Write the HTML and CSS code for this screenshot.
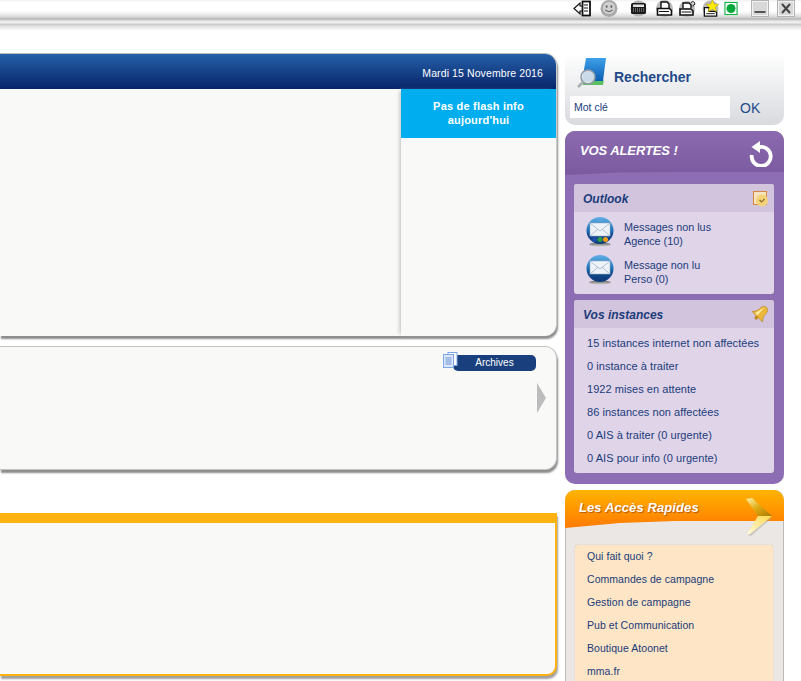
FILE: index.html
```html
<!DOCTYPE html>
<html lang="fr">
<head>
    <meta charset="UTF-8">
    <title>Accueil</title>
    <link rel="stylesheet" href="styles.css">
</head>
<body>
    <div class="toolbar">
        <svg class="tool w18" viewBox="0 0 18 17"><path d="M1 8.500l6-5.500v3h3v5H7v3z" fill="#fff" stroke="#111" stroke-width="1.200"/><rect x="9.500" y="1.500" width="7.500" height="14" fill="#fff" stroke="#111" stroke-width="1.800"/><path d="M11 5h4M11 8h4M11 11h4" stroke="#111" stroke-width="1.200"/></svg>
        <svg class="tool w18 gap9" viewBox="0 0 18 18"><circle cx="9" cy="9" r="9" fill="#aaa"/><circle cx="9" cy="8.500" r="7" fill="#d0d0d0" stroke="#a4a4a4"/><ellipse cx="6.500" cy="7" rx="1" ry="1.500" fill="#666"/><ellipse cx="11.500" cy="7" rx="1" ry="1.500" fill="#666"/><path d="M5 10.500q4 3.500 8 0" fill="none" stroke="#666" stroke-width="1.200"/></svg>
        <svg class="tool w17 gap12" viewBox="0 0 17 16"><circle cx="8.500" cy="8" r="8" fill="#b4b4b4"/><rect x="1" y="2.500" width="15" height="11" rx="1.500" fill="#1c1c1c"/><rect x="3" y="4" width="11" height="2.500" fill="#e4e4e4"/><path d="M3 8.500h11M3 10.500h11" stroke="#aaa" stroke-dasharray="1 1"/></svg>
        <svg class="tool w17 gap9" viewBox="0 0 17 17"><circle cx="8.500" cy="8.500" r="8.500" fill="#bcbcbc"/><path d="M5 8V2h6l2 2v4" fill="#fff" stroke="#111" stroke-width="1.400"/><path d="M1.500 8.500h12l2 2v4.500h-14z" fill="#fff" stroke="#111" stroke-width="1.600"/><path d="M3 11.500h10" stroke="#111"/></svg>
        <svg class="tool w17 gap6" viewBox="0 0 17 17"><circle cx="8" cy="9" r="8" fill="#bcbcbc"/><path d="M4 8V3h6l2 2v3" fill="#fff" stroke="#111" stroke-width="1.400"/><path d="M1 9h11l2 2v4H1z" fill="#fff" stroke="#111" stroke-width="1.600"/><path d="M2.500 12h10" stroke="#111"/><path d="M12 2.500q2-2 3.500 0t-1.500 3v1" fill="none" stroke="#111"/></svg>
        <svg class="tool w17 gap6" viewBox="0 0 17 18"><circle cx="8.500" cy="9" r="8.500" fill="#bcbcbc"/><path d="M2 8h5v4h6l2 1v4H2z" fill="#fff" stroke="#111" stroke-width="1.400"/><path d="M4 14.500h9" stroke="#111"/><path d="M10.500-.5l2 4.800 5 .2-3.800 3.200 1.300 4.800-4.500-2.700-4.500 2.700 1.300-4.800L3.500 4.500l5-.2z" fill="#ffec00" stroke="#8a7a00" stroke-width=".4"/></svg>
        <svg class="tool w14 gap5" viewBox="0 0 14 16"><rect x="0" y="1" width="14" height="14" fill="#bfe8c9"/><rect x="1" y="2" width="12" height="12" fill="#fff" stroke="#17b34a"/><circle cx="7" cy="8" r="4.500" fill="#07a83b"/></svg>
        <svg class="tool w18 gap13" viewBox="0 0 18 17"><rect x=".5" y=".5" width="17" height="16" fill="#f2f2f2" stroke="#b4b4b4"/><rect x="2" y="2" width="14" height="13" fill="#d8d8d8"/><rect x="3.500" y="11" width="11" height="2" fill="#555"/></svg>
        <svg class="tool w18 gap8" viewBox="0 0 18 17"><rect x=".5" y=".5" width="17" height="16" fill="#f2f2f2" stroke="#b4b4b4"/><rect x="2" y="2" width="14" height="13" fill="#d8d8d8"/><path d="M5 4l8 9M13 4l-8 9" stroke="#444" stroke-width="2"/></svg>
    </div>

    <div class="page">
        <main class="main">
            <section class="panel panel-news">
                <div class="news-head">Mardi 15 Novembre 2016</div>
                <div class="news-body">
                    <div class="news-left"></div>
                    <div class="flash">
                        <div class="flash-title">Pas de flash info<br>aujourd'hui</div>
                    </div>
                </div>
            </section>

            <section class="panel panel-archives">
                <div class="archives-line">
                    <svg class="archives-icon" viewBox="0 0 15 16"><rect x="5" y=".5" width="9" height="13" fill="#fff" stroke="#7fa6e6"/><rect x=".5" y="2.500" width="10" height="13" fill="#dbe6fa" stroke="#7fa6e6"/><path d="M2.500 6h6M2.500 8h6M2.500 10h6M2.500 12h6" stroke="#6f96d8"/></svg>
                    <div class="archives-btn">Archives</div>
                </div>
                <div class="arrow-next"></div>
            </section>

            <section class="panel panel-orange"></section>
        </main>

        <aside class="side">
            <div class="search">
                <div class="search-title">
                    <svg class="search-icon" viewBox="0 0 30 30">
                        <defs>
                            <linearGradient id="bookBlue" x1="0" y1="0" x2="0" y2="1"><stop offset="0" stop-color="#3fa0ea"/><stop offset="1" stop-color="#0a5fb4"/></linearGradient>
                        </defs>
                        <path d="M9 0h20l-3 23H5z" fill="url(#bookBlue)"/>
                        <path d="M5 23h21l1-2-1 6H6z" fill="#5cc060"/>
                        <circle cx="11" cy="19" r="7" fill="#dfe7ee" fill-opacity=".9" stroke="#8d9aa5" stroke-width="1.500"/>
                        <path d="M6 24l-5 5" stroke="#a8b0b4" stroke-width="2.500"/>
                    </svg>
                    <span>Rechercher</span>
                </div>
                <div class="search-form">
                    <div class="search-input">Mot clé</div>
                    <div class="search-ok">OK</div>
                </div>
            </div>

            <div class="alerts">
                <div class="alerts-head">
                    <span class="alerts-title">VOS ALERTES !</span>
                    <svg class="refresh" viewBox="0 0 24 26"><path d="M9 6.500A9.500 9.500 0 1 1 2.800 14" fill="none" stroke="#fff" stroke-width="3.800"/><path d="M11 0v12L2.500 6z" fill="#fff"/></svg>
                </div>

                <div class="box box-outlook">
                    <div class="box-head">
                        <span>Outlook</span>
                        <svg class="box-icon" viewBox="0 0 16 16"><rect x=".5" y=".5" width="13" height="13" fill="#f6e4c0" stroke="#d8873a"/><circle cx="9" cy="9.500" r="6" fill="#f3d27a"/><path d="M6.500 9l2 2 3-3" fill="none" stroke="#8a6a20" stroke-width="1.200"/></svg>
                    </div>
                    <div class="mail-row">
                        <svg class="mail-icon" viewBox="0 0 28 30">
                            <defs>
                                <linearGradient id="sphere" x1="0" y1="0" x2="0" y2="1"><stop offset="0" stop-color="#62b0e6"/><stop offset=".5" stop-color="#1b70b8"/><stop offset=".65" stop-color="#114a90"/><stop offset="1" stop-color="#0d3a78"/></linearGradient>
                                <linearGradient id="sphereShadow" x1="0" y1="0" x2="0" y2="1"><stop offset="0" stop-color="#666"/><stop offset="1" stop-color="#ccc"/></linearGradient>
                            </defs>
                            <ellipse cx="14" cy="27.500" rx="11" ry="2" fill="url(#sphereShadow)"/>
                            <circle cx="14" cy="13.500" r="13.500" fill="url(#sphere)"/>
                            <rect x="4" y="6" width="20" height="13" fill="#eef3f8" stroke="#9fb4c8" stroke-width=".6"/>
                            <path d="M4 6l10 8 10-8M4 19l8-7M24 19l-8-7" fill="none" stroke="#9fb4c8" stroke-width=".8"/>
                            <circle cx="8.500" cy="22.500" r="2.500" fill="#1f4fa8"/>
                            <circle cx="14" cy="22.500" r="2.500" fill="#2e9e46"/>
                            <circle cx="19.500" cy="22.500" r="2.500" fill="#f39a12"/>
                        </svg>
                        <div class="mail-text">Messages non lus<br>Agence (10)</div>
                    </div>
                    <div class="mail-row">
                        <svg class="mail-icon" viewBox="0 0 28 30">
                            <ellipse cx="14" cy="27.500" rx="11" ry="2" fill="url(#sphereShadow)"/>
                            <circle cx="14" cy="13.500" r="13.500" fill="url(#sphere)"/>
                            <rect x="4" y="6" width="20" height="13" fill="#eef3f8" stroke="#9fb4c8" stroke-width=".6"/>
                            <path d="M4 6l10 8 10-8M4 19l8-7M24 19l-8-7" fill="none" stroke="#9fb4c8" stroke-width=".8"/>
                        </svg>
                        <div class="mail-text">Message non lu<br>Perso (0)</div>
                    </div>
                </div>

                <div class="box box-instances">
                    <div class="box-head">
                        <span>Vos instances</span>
                        <svg class="bell" viewBox="0 0 17 17">
                            <g transform="rotate(45 8.500 8.500)">
                                <path d="M8.500 0C6 0 4.500 2 4.500 5.500 4.500 9 3 11 1 13h15c-2-2-3.500-4-3.500-7.500C12.500 2 11 0 8.500 0z" fill="#ecb83c" stroke="#b08016" stroke-width=".6"/>
                                <path d="M7 2C6 4 6 8 4.500 12h3z" fill="#ffeeb0"/>
                                <circle cx="8.500" cy="14.500" r="1.800" fill="#c08a1c"/>
                            </g>
                        </svg>
                    </div>
                    <ul class="link-list">
                        <li>15 instances internet non affectées</li>
                        <li>0 instance à traiter</li>
                        <li>1922 mises en attente</li>
                        <li>86 instances non affectées</li>
                        <li>0 AIS à traiter (0 urgente)</li>
                        <li>0 AIS pour info (0 urgente)</li>
                    </ul>
                </div>
            </div>

            <div class="quick">
                <div class="quick-head">
                    <span class="quick-title">Les Accès Rapides</span>
                    <svg class="chevron" viewBox="0 0 28 38">
                        <defs>
                            <linearGradient id="armTop" x1="0" y1="0" x2="1" y2="1"><stop offset="0" stop-color="#fff6b0"/><stop offset=".5" stop-color="#e0a810"/><stop offset="1" stop-color="#a87a08"/></linearGradient>
                            <linearGradient id="armLow" x1="1" y1="0" x2="0" y2="1"><stop offset="0" stop-color="#ffd84a"/><stop offset="1" stop-color="#fffbe0"/></linearGradient>
                        </defs>
                        <path d="M3 37l12-17h12L6 38z" fill="#b0a8a0" fill-opacity=".5"/>
                        <path d="M1 1l6-1 20 18H13z" fill="url(#armTop)"/>
                        <path d="M13 18h14L5 36H2z" fill="url(#armLow)"/>
                    </svg>
                </div>
                <ul class="link-list quick-list">
                    <li>Qui fait quoi ?</li>
                    <li>Commandes de campagne</li>
                    <li>Gestion de campagne</li>
                    <li>Pub et Communication</li>
                    <li>Boutique Atoonet</li>
                    <li>mma.fr</li>
                </ul>
            </div>
        </aside>
    </div>
</body>
</html>
```

FILE: styles.css
```css
html, body {
    height: 681px;
    overflow: hidden;
}
body {
    margin: 0;
    background-color: #fff;
    font-family: "Liberation Sans", Arial, sans-serif;
    font-size: 11px;
    color: #1a3c7a;
}
ul {
    list-style: none;
    margin: 0;
    padding: 0;
}
svg {
    display: block;
}

/* barre du haut */
.toolbar {
    height: 30px;
    box-sizing: border-box;
    display: flex;
    align-items: flex-start;
    justify-content: flex-end;
    padding: 0 6px 0 0;
    background: linear-gradient(to bottom, #f0f0f0 0, #fff 2px, #fff 11px, #eee 14px, #d8d8d8 17px, #b4b4b4 19px, #e8e8e8 21px, #f2f2f2 23px, #c8c8c8 24px, #e8e8e8 27px, #fff 31px);
}
.tool {
    height: 17px;
    flex: none;
}
.w18 { width: 18px; }
.w17 { width: 17px; }
.w14 { width: 14px; }
.gap5 { margin-left: 5px; }
.gap6 { margin-left: 6px; }
.gap8 { margin-left: 8px; }
.gap9 { margin-left: 9px; }
.gap12 { margin-left: 12px; }
.gap13 { margin-left: 13px; }

.page {
    width: 784px;
    margin-top: 23px;
    display: flex;
    gap: 8px;
    align-items: flex-start;
}

/* colonne principale */
.main {
    width: 557px;
    flex: none;
}
.panel {
    background-color: #f9f9f7;
    border-radius: 0 12px 12px 0;
    box-sizing: border-box;
}
.panel-news {
    height: 283px;
    border-top: 1px solid #bcbcbc;
    border-right: 1px solid #ccc;
    box-shadow: 1px 3px 2px #8c8c8c;
}
.news-head {
    height: 35px;
    box-sizing: border-box;
    padding: 13px 13px 0 0;
    text-align: right;
    color: #fff;
    font-size: 10.5px;
    letter-spacing: .1px;
    background: linear-gradient(to bottom, #2560a8, #08246a);
    border-radius: 0 11px 0 0;
}
.news-body {
    display: flex;
    height: 247px;
}
.news-left {
    flex: 1;
}
.flash {
    width: 155px;
    box-sizing: border-box;
    box-shadow: -3px 0 4px -2px #bbb;
}
.flash-title {
    height: 49px;
    box-sizing: border-box;
    padding-top: 10px;
    background-color: #00aeef;
    color: #fff;
    font-weight: bold;
    font-size: 11px;
    letter-spacing: .2px;
    line-height: 14px;
    text-align: center;
}
.panel-archives {
    position: relative;
    height: 124px;
    margin-top: 10px;
    border: 1px solid #c4c4c4;
    border-left: none;
    box-shadow: 1px 3px 2px #8c8c8c;
}
.archives-line {
    display: flex;
    justify-content: flex-end;
    align-items: flex-start;
    padding: 5px 20px 0 0;
}
.archives-icon {
    width: 15px;
    height: 16px;
    margin-right: -5px;
    position: relative;
    z-index: 1;
}
.archives-btn {
    width: 83px;
    height: 16px;
    margin-top: 3px;
    background-color: #1a3f7d;
    border-radius: 5px;
    color: #fff;
    font-size: 10px;
    line-height: 16px;
    text-align: center;
}
.arrow-next {
    position: absolute;
    right: 10px;
    top: 36px;
    border-left: 9px solid #bcbcbc;
    border-top: 15px solid transparent;
    border-bottom: 15px solid transparent;
}
.panel-orange {
    height: 163px;
    margin-top: 43px;
    border-top: 10px solid #ffb311;
    border-right: 2px solid #ffb311;
    border-bottom: 2px solid #ffb311;
    border-radius: 0 0 10px 0;
    box-shadow: 1px 3px 2px #a0a0a0;
}

/* colonne droite */
.side {
    width: 219px;
    flex: none;
}
.search {
    height: 72px;
    box-sizing: border-box;
    padding: 4px 0 0 5px;
    background: linear-gradient(to bottom, #fff, #d8dade);
    border-radius: 0 0 10px 10px;
}
.search-title {
    display: flex;
    align-items: flex-end;
    height: 31px;
    padding-left: 7px;
    font-size: 14px;
    font-weight: bold;
    color: #1f4a8a;
}
.search-title span {
    margin-left: 7px;
    margin-bottom: 3px;
}
.search-icon {
    width: 30px;
    height: 30px;
}
.search-form {
    display: flex;
    margin-top: 8px;
}
.search-input {
    width: 156px;
    height: 22px;
    padding-left: 4px;
    background-color: #fff;
    font-size: 10.5px;
    line-height: 22px;
}
.search-ok {
    margin-left: 10px;
    font-size: 14px;
    line-height: 24px;
    color: #1f4a8a;
}
.alerts {
    position: relative;
    height: 353px;
    margin-top: 6px;
    box-sizing: border-box;
    padding: 53px 10px 0 9px;
    background-color: #8d6db3;
    border-radius: 10px;
    box-shadow: inset 0 1px 0 #aaa;
}
.alerts-head {
    position: absolute;
    left: 0;
    right: 0;
    top: 0;
    height: 44px;
    display: flex;
    justify-content: space-between;
    align-items: flex-start;
    padding: 12px 11px 0 15px;
    box-sizing: border-box;
}
.alerts-head::before {
    content: "";
    position: absolute;
    left: 0;
    right: 0;
    top: 0;
    bottom: 0;
    border-radius: 10px 10px 0 0;
    background: linear-gradient(to bottom, #8c6ab0, #7c5aa0);
    clip-path: polygon(0 0, 100% 0, 100% 41px, 50% 41px, 25% 41.500px, 0 44px);
}
.alerts-title {
    position: relative;
    color: #fff;
    font-size: 13px;
    font-weight: bold;
    font-style: italic;
    letter-spacing: -.1px;
}
.refresh {
    position: relative;
    width: 24px;
    height: 26px;
    margin: -2px 0 0 0;
}
.box {
    width: 200px;
    background-color: #e0d4e9;
    border-radius: 3px;
    box-shadow: 0 0 1px #888;
}
.box-outlook {
    height: 110px;
}
.box-instances {
    height: 173px;
    margin-top: 6px;
}
.box-head {
    height: 28px;
    box-sizing: border-box;
    padding: 2px 4px 0 9px;
    display: flex;
    align-items: center;
    justify-content: space-between;
    background-color: #d3c4de;
    border-radius: 3px 3px 0 0;
    font-size: 12px;
    font-weight: bold;
    font-style: italic;
    color: #1a3c7a;
}
.box-icon {
    width: 16px;
    height: 16px;
    margin-right: 1px;
}
.bell {
    width: 17px;
    height: 17px;
    margin: -4px 1px 0 0;
}
.mail-row {
    display: flex;
    align-items: flex-start;
    height: 38px;
    padding: 5px 0 0 12px;
    box-sizing: border-box;
}
.mail-icon {
    width: 28px;
    height: 30px;
}
.mail-text {
    margin-left: 10px;
    line-height: 14px;
    margin-top: 3px;
    font-size: 10.8px;
}
.link-list {
    padding: 4px 0 0 13px;
    letter-spacing: .05px;
}
.link-list li {
    height: 23px;
    line-height: 23px;
}
.quick {
    position: relative;
    height: 191px;
    margin-top: 6px;
    box-sizing: border-box;
    padding-top: 56px;
    background-color: #ebe7e4;
    border-radius: 10px 10px 0 0;
    box-shadow: inset 1px 1px 0 #bbb, inset -1px 0 0 #bbb;
}
.quick-head {
    position: absolute;
    left: 0;
    right: 0;
    top: 0;
    height: 50px;
}
.quick-head::before {
    content: "";
    position: absolute;
    left: 0;
    right: 0;
    top: 0;
    height: 38px;
    border-radius: 10px 10px 0 0;
    background: linear-gradient(to bottom, #ffb400, #ff7a00);
    clip-path: polygon(0 0, 100% 0, 100% 31px, 50% 31px, 25% 33px, 0 38px);
}
.quick-title {
    position: absolute;
    left: 14px;
    top: 10px;
    color: #fff;
    font-size: 13px;
    font-weight: bold;
    font-style: italic;
    letter-spacing: .1px;
    text-shadow: 1px 1px 1px #b05a00;
}
.chevron {
    position: absolute;
    left: 180px;
    top: 8px;
    width: 28px;
    height: 38px;
}
.quick-list {
    width: 198px;
    margin-left: 10px;
    height: 140px;
    box-sizing: border-box;
    padding: 0 0 0 12px;
    background-color: #fde5c6;
    border-radius: 3px 3px 0 0;
    box-shadow: 0 0 1px #b8a89a;
    font-size: 10.5px;
}
.quick-list li:first-child {
    margin-top: -1px;
}
```
